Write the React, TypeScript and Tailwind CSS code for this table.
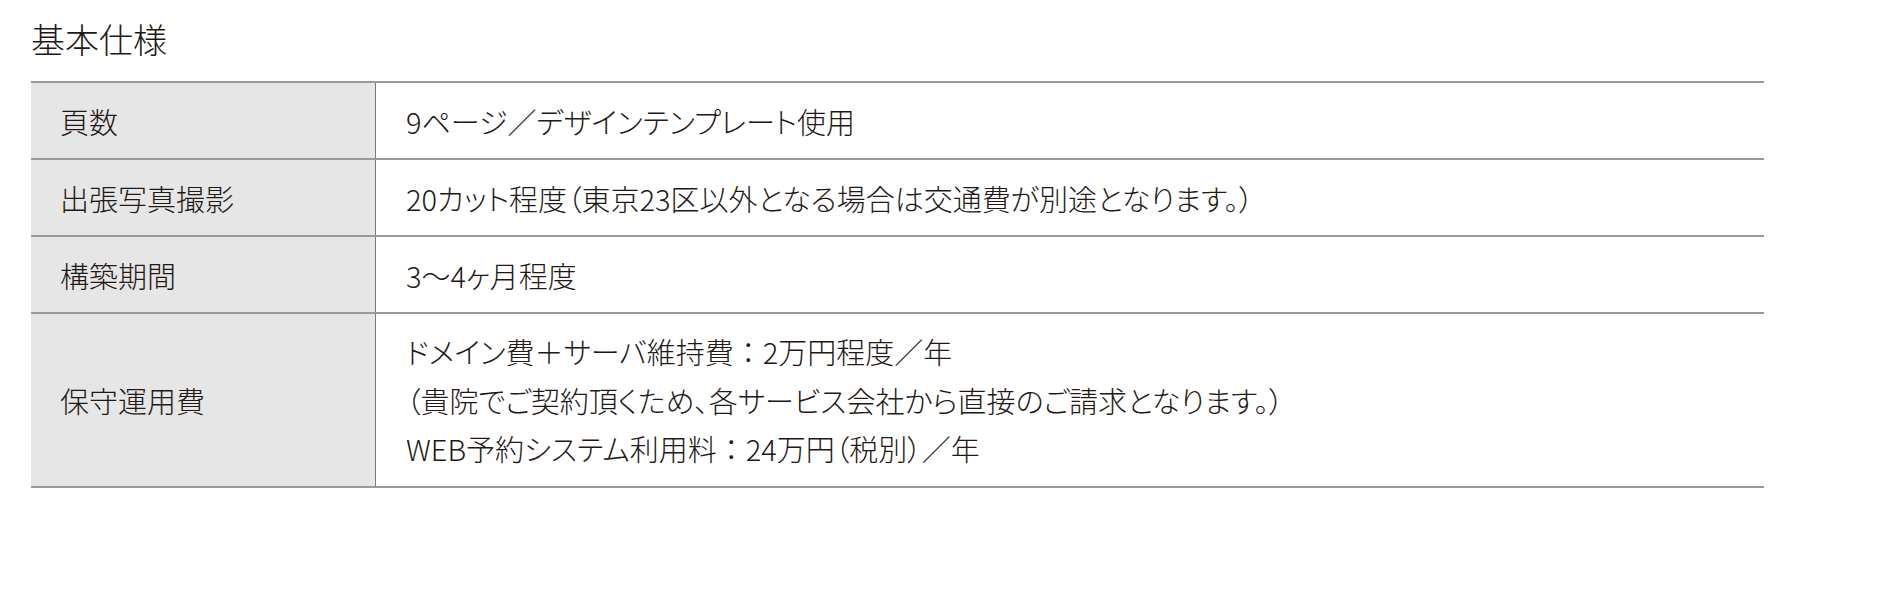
import React from 'react';

// ── Data ──────────────────────────────────────────────────────────────────────

// "：" keeps its full width (no palt), as in the printed sheet
const Colon = () => <span className="[font-feature-settings:normal]">：</span>;

const SPECS: { label: string; lines: React.ReactNode[] }[] = [
  { label: '頁数', lines: ['9ページ／デザインテンプレート使用'] },
  { label: '出張写真撮影', lines: ['20カット程度（東京23区以外となる場合は交通費が別途となります。）'] },
  { label: '構築期間', lines: ['3〜4ヶ月程度'] },
  {
    label: '保守運用費',
    lines: [
      <>ドメイン費＋サーバ維持費<Colon />2万円程度／年</>,
      '（貴院でご契約頂くため、各サービス会社から直接のご請求となります。）',
      <>WEB予約システム利用料<Colon />24万円（税別）／年</>,
    ],
  },
];

// ── Row ───────────────────────────────────────────────────────────────────────

function SpecRow({ label, lines }: { label: string; lines: React.ReactNode[] }) {
  const multi = lines.length > 1;
  return (
    <div className="flex border-b-2 border-[#9a9a9a]">
      <div className="w-[345px] shrink-0 bg-[#e6e6e6] border-r border-[#7a7a7a] pl-[29px] flex items-center">
        {label}
      </div>
      <div
        className={`flex-1 pl-[30px] flex flex-col justify-center ${
          multi ? 'py-[13px] leading-[48.5px]' : 'h-[75px]'
        }`}
      >
        {lines.map((l, i) => (
          <p key={i}>{l}</p>
        ))}
      </div>
    </div>
  );
}

// ── Page ──────────────────────────────────────────────────────────────────────

export default function App() {
  return (
    <div
      className="w-[1900px] h-[600px] bg-white pl-[31px] pt-[13px] text-[#231815] font-light [font-feature-settings:'palt']"
      style={{ fontFamily: '"Noto Sans CJK JP", "Noto Sans", sans-serif' }}
    >
      <h2 className="text-[34px] leading-[51px] font-light">基本仕様</h2>

      <div className="mt-[17px] w-[1733px] border-t-2 border-[#9a9a9a] text-[29px] leading-[40px]">
        {SPECS.map((s) => (
          <SpecRow key={s.label} label={s.label} lines={s.lines} />
        ))}
      </div>
    </div>
  );
}
